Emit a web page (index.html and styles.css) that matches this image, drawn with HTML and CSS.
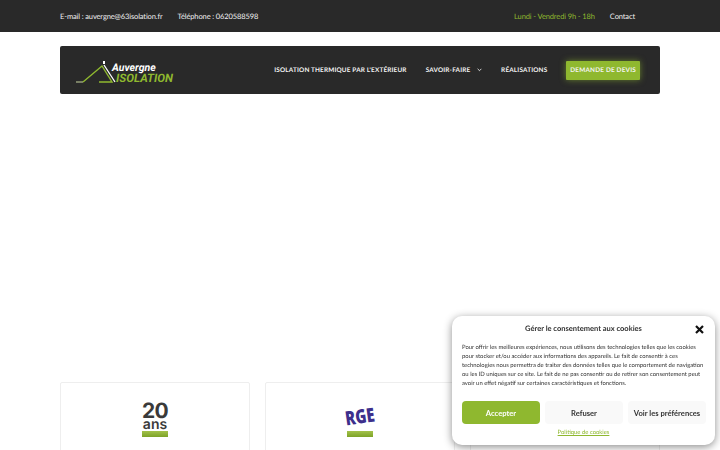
FILE: index.html
```html
<!DOCTYPE html>
<html lang="fr">
<head>
    <meta charset="UTF-8">
    <meta name="viewport" content="width=device-width, initial-scale=1.0">
    <title>Auvergne Isolation</title>
    <link rel="stylesheet" href="styles.css">
</head>
<body>
    <div class="topbar">
        <div class="container topbar-inner">
            <div class="topbar-group">
                <span>E-mail : auvergne@63isolation.fr</span>
                <span>Téléphone : 0620588598</span>
            </div>
            <div class="topbar-group">
                <span class="hours">Lundi - Vendredi 9h - 18h</span>
                <span>Contact</span>
            </div>
        </div>
    </div>

    <div class="container">
        <div class="header">
            <div class="logo">
                <svg class="logo-roof" width="42" height="26" viewBox="0 0 42 26">
                    <path d="M1 25H8" fill="none" stroke="#c9d6a0" stroke-width="1"/>
                    <path d="M8 25L27 9L37 25H24" fill="none" stroke="#8fb82f" stroke-width="1.4"/>
                    <path d="M29 8L40 25" fill="none" stroke="#ffffff" stroke-width="1.3"/>
                    <rect x="28" y="4" width="2" height="3" fill="#ffffff"/>
                </svg>
                <div class="logo-text">
                    <span class="logo-top">Auvergne</span>
                    <span class="logo-bottom">ISOLATION</span>
                </div>
            </div>
            <nav class="nav">
                <a>ISOLATION THERMIQUE PAR L'EXTÉRIEUR</a>
                <a class="nav-drop">SAVOIR-FAIRE
                    <svg width="5" height="4" viewBox="0 0 5 4"><path d="M0.6 0.8L2.5 2.7L4.4 0.8" fill="none" stroke="#ffffff" stroke-width="0.8"/></svg>
                </a>
                <a>RÉALISATIONS</a>
                <a class="nav-cta">DEMANDE DE DEVIS</a>
            </nav>
        </div>

        <div class="cards">
            <div class="card">
                <div class="badge">
                    <div class="badge-years"><b>20</b><span>ans</span></div>
                    <div class="badge-bar"></div>
                </div>
            </div>
            <div class="card">
                <div class="badge">
                    <div class="badge-rge">RGE</div>
                    <div class="badge-bar"></div>
                </div>
            </div>
            <div class="card"></div>
        </div>
    </div>

    <div class="cookie">
        <div class="cookie-head">
            <h4>Gérer le consentement aux cookies</h4>
            <svg class="cookie-close" width="9" height="9" viewBox="0 0 9 9"><path d="M1 1L8 8M8 1L1 8" stroke="#111111" stroke-width="2.2"/></svg>
        </div>
        <p>Pour offrir les meilleures expériences, nous utilisons des technologies telles que les cookies pour stocker et/ou accéder aux informations des appareils. Le fait de consentir à ces technologies nous permettra de traiter des données telles que le comportement de navigation ou les ID uniques sur ce site. Le fait de ne pas consentir ou de retirer son consentement peut avoir un effet négatif sur certaines caractéristiques et fonctions.</p>
        <div class="cookie-buttons">
            <button class="btn btn-accept">Accepter</button>
            <button class="btn">Refuser</button>
            <button class="btn">Voir les préférences</button>
        </div>
        <a class="cookie-link">Politique de cookies</a>
    </div>
</body>
</html>
```

FILE: styles.css
```css
:root {
    --dark: #292929;
    --green: #8fb82f;
}

html, body {
    height: 100%;
    overflow: hidden;
}

body {
    font-family: "Lato", "Open Sans", sans-serif;
    margin: 0;
    background-color: white;
    color: #333;
    text-rendering: geometricPrecision;
}

.container {
    width: 600px;
    margin: 0 auto;
}

/* barre du haut */
.topbar {
    height: 32px;
    background-color: var(--dark);
    color: #f0f0f0;
    font-size: 7.5px;
    letter-spacing: -0.12px;
}

.topbar-inner {
    display: flex;
    justify-content: space-between;
    align-items: center;
    height: 100%;
}

.topbar-group {
    display: flex;
    gap: 15px;
    padding-right: 25px;
}

.topbar-group:first-child {
    padding-right: 0;
}

.hours {
    color: var(--green);
}

/* menu */
.header {
    display: flex;
    justify-content: space-between;
    align-items: center;
    height: 48px;
    margin-top: 14px;
    padding: 0 20px 0 15px;
    box-sizing: border-box;
    background-color: var(--dark);
    border-radius: 2px;
}

.logo {
    display: flex;
    align-items: flex-end;
}

.logo-roof {
    margin-right: -5px;
}

.logo-text {
    display: flex;
    flex-direction: column;
    font-family: "Roboto", sans-serif;
    font-style: italic;
    font-weight: 700;
    line-height: 10px;
}

.logo-top {
    color: white;
    font-size: 10.5px;
}

.logo-bottom {
    color: var(--green);
    font-size: 11.6px;
    margin-left: 4px;
}

.nav {
    display: flex;
    align-items: center;
    gap: 19px;
    color: #f4f4f4;
    font-size: 6.4px;
    font-weight: 700;
    letter-spacing: 0.17px;
}

.nav-drop svg {
    margin-left: 5px;
}

.nav-cta {
    padding: 6px 4px;
    background-color: var(--green);
    border-radius: 1px;
    box-shadow: 0 0 6px rgba(143, 184, 47, 0.6);
    letter-spacing: 0.2px;
}

/* cartes */
.cards {
    display: grid;
    grid-template-columns: repeat(3, 190px);
    gap: 15px;
    margin-top: 288px;
}

.card {
    height: 120px;
    border: 1px solid #eeeeee;
    border-radius: 2px;
    box-sizing: border-box;
    padding-top: 20px;
}

.badge {
    width: 26px;
    margin: 0 auto;
}

.badge-years {
    display: flex;
    flex-direction: column;
    align-items: center;
    height: 28px;
    font-family: "Inter", sans-serif;
    color: #3a3a3a;
}

.badge-years b {
    font-size: 21px;
    font-weight: 700;
    line-height: 17px;
    letter-spacing: -0.6px;
}

.badge-years span {
    font-size: 14px;
    font-weight: 600;
    line-height: 9px;
}

.badge-rge {
    display: flex;
    justify-content: center;
    height: 28px;
    padding-top: 4px;
    box-sizing: border-box;
    font-family: "Open Sans", sans-serif;
    font-size: 15px;
    font-weight: 800;
    line-height: 20px;
    color: #3d2f8c;
    white-space: nowrap;
    transform: rotate(-8deg) scaleY(1.3);
}

.badge-bar {
    height: 6px;
    background: linear-gradient(#a3c24a, #7da327);
}

/* fenetre cookies */
.cookie {
    position: fixed;
    left: 452px;
    top: 316px;
    width: 263px;
    height: 129px;
    box-sizing: border-box;
    padding: 0 10px;
    background: white;
    border-radius: 10px;
    box-shadow: 0 2px 8px rgba(0, 0, 0, 0.45);
}

.cookie-head {
    display: flex;
    justify-content: center;
    align-items: center;
    height: 24px;
}

.cookie-head h4 {
    margin: 0;
    font-size: 7.5px;
    font-weight: 700;
    color: #333;
}

.cookie-close {
    position: absolute;
    right: 11px;
    top: 9px;
}

.cookie p {
    margin: 3px 0 0;
    font-size: 5.9px;
    line-height: 9px;
    color: #333;
}

.cookie-buttons {
    display: grid;
    grid-template-columns: 78px 78px 78px;
    gap: 5px;
    margin-top: 13px;
}

.btn {
    height: 23px;
    padding: 0;
    border: 0;
    border-radius: 4px;
    background-color: #f9f9f9;
    color: #333;
    font-family: inherit;
    font-size: 7.6px;
    font-weight: 700;
    white-space: nowrap;
}

.btn-accept {
    background-color: var(--green);
    color: white;
}

.cookie-link {
    display: block;
    margin-top: 5px;
    font-size: 5.9px;
    color: var(--green);
    text-align: center;
    text-decoration: underline;
}
```
